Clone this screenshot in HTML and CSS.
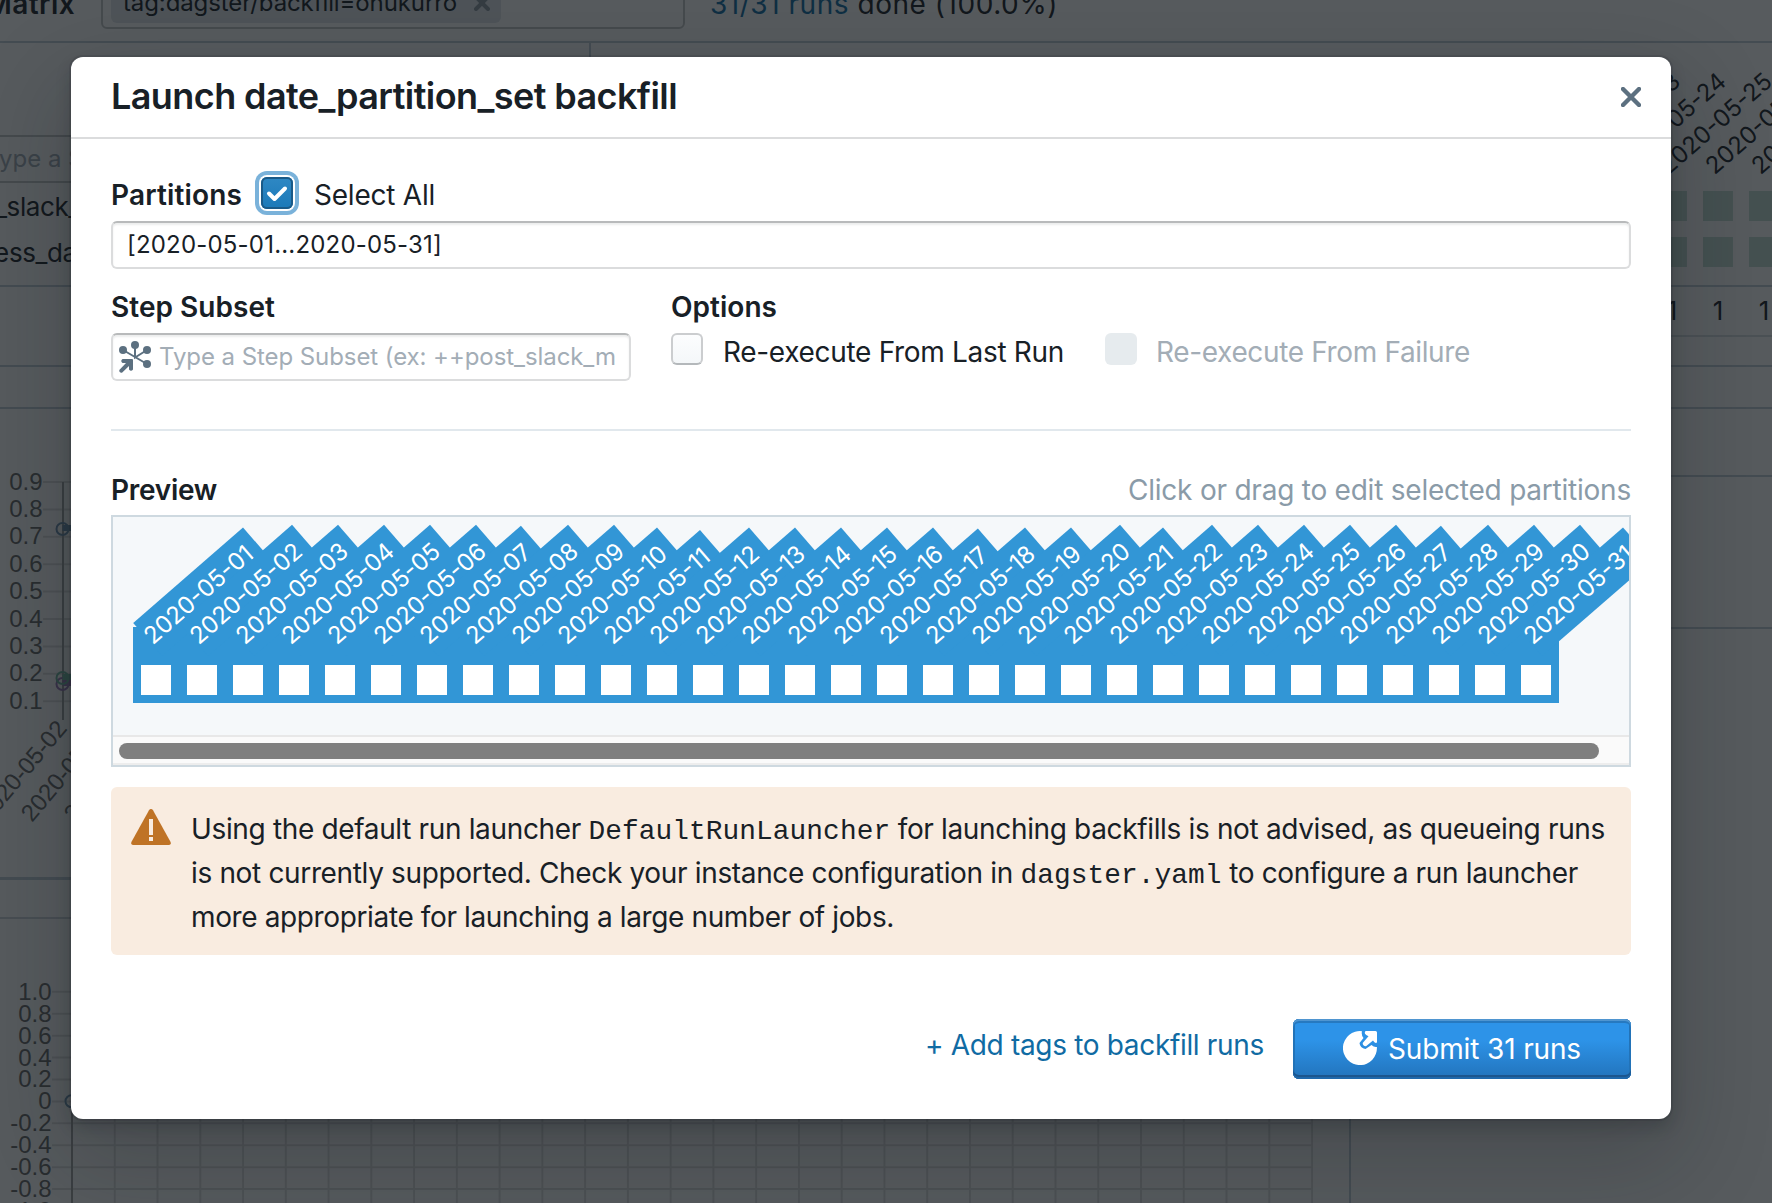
FILE: index.html
```html
<!DOCTYPE html>
<html lang="en">
<head>
<meta charset="utf-8">
<title>Launch backfill</title>
<link rel="stylesheet" href="styles.css">
</head>
<body>
<div class="page">
  <div class="topbar">
    <div class="topbar-title"><span class="fit" data-w="89">Matrix</span></div>
    <div class="tag-input">
      <div class="tag"><span class="fit" data-w="334">tag:dagster/backfill=onukurro</span>
        <svg width="16" height="16" viewBox="0 0 16 16"><path d="M2 2L14 14M14 2L2 14" stroke="#8c98a2" stroke-width="4" stroke-linecap="round"/></svg>
      </div>
    </div>
    <div class="run-status"><span class="fit" data-w="348"><a>31/31 runs</a> done (100.0%)</span></div>
  </div>
  <div class="matrix">
    <div class="steps">
      <div class="step-search">Type a Step Subset</div>
      <div class="step-name">post_slack_message</div>
      <div class="step-name second">process_data</div>
    </div>
    <svg class="matrix-grid" id="matrix" width="181" height="242"></svg>
  </div>
  <div class="counts"><span>1</span><span>1</span><span>1</span></div>
  <div class="strip"></div>
  <div class="spacer"></div>
  <div class="charts">
    <div class="chart-col">
      <svg class="chart" id="chart1" width="1349" height="468"></svg>
      <div class="chart-head"></div>
      <svg class="chart" id="chart2" width="1349" height="284"></svg>
    </div>
    <div class="legend-col"><div class="legend-a"></div><div class="legend-b"></div></div>
  </div>
</div>

<div class="overlay">
  <div class="dialog">
    <header class="dialog-header">
      <h1><span class="fit" data-w="566">Launch date_partition_set backfill</span></h1>
      <svg width="20" height="20" viewBox="0 0 20 20"><path d="M2 2L18 18M18 2L2 18" stroke="#5c7080" stroke-width="4.4" stroke-linecap="round"/></svg>
    </header>
    <div class="dialog-body">
      <div class="partitions-row">
        <span class="label"><span class="fit" data-w="131">Partitions</span></span>
        <span class="checkbox checked"><svg width="32" height="32" viewBox="0 0 32 32"><path d="M8 16.500L13.500 22L24 11.500" fill="none" stroke="#fff" stroke-width="4" stroke-linecap="round" stroke-linejoin="round"/></svg></span>
        <span class="select-all"><span class="fit" data-w="121">Select All</span></span>
      </div>
      <div class="field"><span class="fit" data-w="315">[2020-05-01...2020-05-31]</span></div>
      <div class="options-row">
        <div class="subset">
          <div class="label"><span class="fit" data-w="164">Step Subset</span></div>
          <div class="field subset-field">
            <svg width="32" height="32" viewBox="0 0 32 32" fill="#5c7080">
              <path d="M4 9L28 23M16 4V16.500L28 9" fill="none" stroke="#5c7080" stroke-width="2"/>
              <circle cx="4" cy="9" r="4"/><circle cx="16" cy="4" r="4"/><circle cx="28" cy="9" r="4"/><circle cx="28" cy="23" r="4"/>
              <path d="M3.500 18H13Q14 18 14 19V28.500Q12 31 10 28.500V25L3 31.700Q0 32 .3 29L7 22H3.500Q1 20 3.500 18Z"/>
            </svg>
            <span class="placeholder"><span class="fit" data-w="457">Type a Step Subset (ex: ++post_slack_m</span></span>
          </div>
        </div>
        <div class="options">
          <div class="label"><span class="fit" data-w="106">Options</span></div>
          <div class="checks">
            <span class="checkbox"></span><span class="check-text first"><span class="fit" data-w="341">Re-execute From Last Run</span></span>
            <span class="checkbox disabled"></span><span class="check-text off"><span class="fit" data-w="314">Re-execute From Failure</span></span>
          </div>
        </div>
      </div>
      <hr>
      <div class="preview-head">
        <span class="label"><span class="fit" data-w="106">Preview</span></span>
        <span class="hint"><span class="fit" data-w="503">Click or drag to edit selected partitions</span></span>
      </div>
      <div class="preview">
        <svg id="preview" width="1516" height="218"></svg>
        <div class="scrollbar"><div class="thumb"></div></div>
      </div>
      <div class="callout">
        <svg width="40" height="36" viewBox="0 0 40 36"><path d="M20 0Q21.300 0 22 1.200L39.600 33Q40.300 36 38 36H2Q-.3 36 .4 33L18 1.200Q18.700 0 20 0Z" fill="#bf7326"/><path d="M18 10h4v16h-4zM18 28h4v4h-4z" fill="#f9ece0"/></svg>
        <div class="callout-text">
          <div><span class="fit" data-w="1414">Using the default run launcher <code>DefaultRunLauncher</code> for launching backfills is not advised, as queueing runs</span></div>
          <div><span class="fit" data-w="1387">is not currently supported. Check your instance configuration in <code>dagster.yaml</code> to configure a run launcher</span></div>
          <div><span class="fit" data-w="703">more appropriate for launching a large number of jobs.</span></div>
        </div>
      </div>
    </div>
    <footer class="dialog-footer">
      <a class="add-tags"><span class="fit" data-w="339">+ Add tags to backfill runs</span></a>
      <div class="submit">
        <svg width="34" height="34" viewBox="0 0 34 34"><path d="M19 .2A17 17 0 1 0 33.900 16Q31 16.500 28.500 14L22.500 18Q17 17 16.500 12L20.500 7Q18 4 19 .2Z" fill="#fff"/><path d="M22.500 0H32.500Q34 0 34 1.500V11.500Q32 13 30 9.500L23 15.200Q19.500 15 19.700 12L25.500 5.200Q20 3 22.500 0Z" fill="#fff"/></svg>
        <span class="fit" data-w="193">Submit 31 runs</span>
      </div>
    </footer>
  </div>
</div>
<script src="main.js"></script>
</body>
</html>
```
FILE: styles.css
```css
* { box-sizing: border-box; }
body { margin: 0; width: 1772px; height: 1203px; overflow: hidden; background: #fff; color: #182026; font-family: Inter, "Liberation Sans", sans-serif; font-size: 28px; }
svg { display: block; flex: none; }
svg text { font-family: Inter, sans-serif; font-size: 24px; }
.chart text { font-family: "Liberation Sans", sans-serif; fill: #666; }
.fit { display: inline-block; white-space: pre; }
.page { width: 1772px; height: 1203px; overflow: hidden; display: flex; flex-direction: column; }
.topbar { height: 43px; flex: none; border-bottom: 2px solid #bfccd6; display: flex; align-items: flex-start; white-space: nowrap; }
.topbar-title { width: 101px; padding-right: 26px; font-weight: 600; display: flex; justify-content: flex-end; line-height: 34px; margin-top: -13px; }
.tag-input { width: 584px; height: 60px; margin-top: -31px; border: 2px solid #c4c6c7; border-radius: 6px; padding: 0 8px 4px; display: flex; align-items: flex-end; }
.tag { width: 390px; height: 48px; background: #dfe5ea; border-radius: 6px; font-size: 24px; padding: 0 12px; display: flex; align-items: center; gap: 17px; line-height: 40px; }
.tag svg { margin-top: 8px; }
.tag .fit { margin-top: 7px; }
.run-status { margin: -13px 0 0 25px; line-height: 34px; }
.run-status a { color: #106ba3; }
.matrix { height: 244px; flex: none; border-bottom: 2px solid #bfccd6; display: flex; }
.steps { width: 591px; border-right: 2px solid #bfccd6; padding-top: 92px; }
.step-search { height: 48px; border: solid #c4c6c7; border-width: 2px 0; color: #a0abb5; font-size: 24px; line-height: 44px; text-indent: -15px; white-space: nowrap; overflow: hidden; }
.step-name { height: 46px; line-height: 48px; font-size: 26px; letter-spacing: -.4px; text-indent: -57px; }
.step-name.second { text-indent: -60px; }
.matrix-grid { margin-left: 1000px; }
.counts { height: 50px; flex: none; margin-left: 591px; display: flex; justify-content: flex-end; border-bottom: 2px solid #d8dde0; font-size: 26px; line-height: 47px; }
.counts span { width: 46px; text-align: center; }
.counts span:last-child { margin-right: -15px; }
.strip { height: 30px; flex: none; border-bottom: 2px solid #bfccd6; }
.spacer { height: 42px; flex: none; border-bottom: 2px solid #bfccd6; }
.charts { flex: 1; display: flex; }
.chart-col { width: 1351px; border-right: 2px solid #bfccd6; }
.chart-head { height: 42px; border-top: 3px solid #bfccd6; border-bottom: 2px solid #ccd4da; }
.legend-col { flex: 1; }
.legend-a { height: 68px; border-bottom: 2px solid #bfccd6; }
.legend-b { height: 152px; border-bottom: 2px solid #bfccd6; }

.overlay { position: absolute; inset: 0; background: rgba(16,22,26,.7); padding: 57px 0 0 71px; }
.dialog { width: 1600px; height: 1062px; background: #fff; border-radius: 12px; box-shadow: 0 0 0 2px rgba(16,22,26,.1), 0 8px 16px rgba(16,22,26,.2), 0 36px 92px 12px rgba(16,22,26,.2); display: flex; flex-direction: column; }
.dialog-header { height: 82px; border-bottom: 2px solid #dbdcdd; padding: 0 30px 0 40px; display: flex; align-items: center; justify-content: space-between; }
h1 { margin: 0 0 2px; font-size: 36px; font-weight: 600; line-height: 44px; }
.dialog-body { padding: 32px 40px 0; flex: 1; }
.label { font-weight: 600; line-height: 37px; }
.partitions-row { height: 50px; display: flex; align-items: flex-start; padding-top: 6px; }
.partitions-row .label { width: 150px; }
.select-all { margin-left: 21px; line-height: 37px; }
.checkbox { width: 32px; height: 32px; border-radius: 6px; flex: none; background: linear-gradient(#fcfdfe, #f4f7f9); border: 2px solid #cbcdcf; border-bottom-color: #b4b8bb; }
.checkbox.checked { border: 0; background: linear-gradient(#2f88c4, #1b79b8); box-shadow: inset 0 0 0 2px #1a5a88, 0 0 0 2px #fff, 0 0 0 6px #7ab2da; }
.checkbox.disabled { border: 0; background: #e6ebee; }
.field { height: 48px; border: 2px solid #dbdcdd; border-top-color: #b8babb; border-radius: 6px; box-shadow: inset 0 2px 2px rgba(16,22,26,.08); font-size: 24px; line-height: 44px; padding-left: 14px; background: #fff; white-space: nowrap; }
.options-row { display: flex; gap: 40px; padding-top: 20px; height: 160px; }
.subset { width: 520px; }
.options-row .label { height: 44px; }
.subset-field { padding-left: 6px; display: flex; align-items: center; gap: 8px; line-height: 42px; }
.placeholder { color: #a3adb6; }
.checks { display: flex; height: 36px; line-height: 38px; }
.check-text { margin-left: 20px; white-space: nowrap; }
.check-text.first { width: 382px; }
.check-text.off { color: #a3adb6; margin-left: 19px; }
hr { margin: 0; border: 0; height: 2px; background: #e1e8ed; }
.preview-head { height: 84px; padding-top: 41px; display: flex; justify-content: space-between; line-height: 36px; }
.hint { color: #8a9ba8; }
.preview { height: 252px; border: 2px solid #ced9e0; background: #f5f8fa; }
#preview { overflow: hidden; }
.scrollbar { height: 30px; background: #fafafa; border-top: 2px solid #e8e8e8; border-bottom: 2px solid #ededed; padding: 6px; }
.thumb { width: 1480px; height: 16px; border-radius: 8px; background: #7f7f7f; }
.callout { margin-top: 20px; height: 168px; border-radius: 6px; background: #f9ece0; padding: 20px; display: flex; gap: 20px; }
.callout svg { margin-top: 2px; }
.callout-text { line-height: 45px; white-space: nowrap; }
.callout-text > div { height: 44px; }
code { font-family: "Liberation Mono", monospace; font-size: 27.8px; letter-spacing: .08px; }
.dialog-footer { height: 100px; flex: none; padding-right: 40px; display: flex; justify-content: flex-end; }
.add-tags { color: #106ba3; line-height: 53px; margin-right: 29px; }
.submit { width: 338px; height: 60px; border-radius: 6px; background: linear-gradient(#2d93e8 35%, #2273bb); box-shadow: inset 0 2px #4f95d0, inset 0 4px #2679c0, inset 0 -2px #1f68ab, inset 0 -4px #1c568e, inset 2px 0 #2273b8, inset -2px 0 #2273b8; color: #fff; padding-left: 50px; display: flex; align-items: center; gap: 11px; line-height: 61px; }
.submit svg { margin-top: -2px; }
```
FILE: main.js
```js
// Spread each text run to its design width; code keeps its own pitch.
document.querySelectorAll('.fit').forEach(function (el) {
  var target = Number(el.dataset.w);
  var code = el.querySelector('code');
  var n = el.textContent.length - (code ? code.textContent.length : 0);
  el.style.letterSpacing = (target - el.getBoundingClientRect().width) / n + 'px';
});

// One column header: a date turned by 41 degrees, anchored at its top left corner.
function dateLabel(x, y, date, fill, back) {
  var w = 149.5 - 4 * (date.split('1').length - 1) - 1.5 * (date.split('7').length - 1);
  return '<g transform="translate(' + x + ' ' + y + ') rotate(-41)">' +
    (back ? '<rect width="' + w + '" height="44" fill="' + back + '"/>' : '') +
    '<text x="0" y="29.800" fill="' + fill + '" textLength="' + (w - 10) + '">' + date + '</text></g>';
}
function day(n) { return '2020-05-' + String(n).padStart(2, '0'); }

// Partition preview
var blue = '#3296d6', back = '', front = '';
for (var i = 0; i < 31; i++) {
  var x = 20 + i * 46;
  back += '<rect x="' + x + '" y="110" width="46" height="76" fill="' + blue + '"/>';
  front += '<rect x="' + (x + 8) + '" y="148" width="30" height="30" fill="#fff"/>';
}
for (i = 0; i < 31; i++) back += dateLabel(20.2 + i * 46, 105.9, day(i + 1), '#fff', blue);
document.getElementById('preview').innerHTML = back + front;

// Run matrix, right-hand columns
var m = '';
for (i = 0; i < 5; i++) m += dateLabel(-34 + i * 46, 109.900, day(23 + i), '#182026');
for (i = 0; i < 3; i++) [148, 194].forEach(function (y) {
  m += '<rect x="' + (66 + i * 46) + '" y="' + y + '" width="30" height="30" fill="#c1ded2"/>';
});
document.getElementById('matrix').innerHTML = m;

function line(x1, y1, x2, y2, c) {
  return '<path d="M' + x1 + ' ' + y1 + 'L' + x2 + ' ' + y2 + '" stroke="' + (c || '#dedede') + '" stroke-width="2"/>';
}
function dot(x, y, c) {
  return '<circle cx="' + x + '" cy="' + y + '" r="6" fill="none" stroke="' + c + '" stroke-width="2"/><path d="M' + x + ' ' + (y - 1) + 'h20" stroke="' + c + '" stroke-width="6"/>';
}

var c1 = '';
for (i = 0; i < 9; i++) {
  var y1 = 73 + i * 27.4;
  c1 += line(43, y1, 1312, y1) + '<text x="42.500" y="' + (y1 + 7.5) + '" text-anchor="end">0.' + (9 - i) + '</text>';
}
c1 += line(63, 73, 63, 311, '#a0a0a0') + dot(62.5, 120, '#6d8fae') + dot(62.5, 275, '#9c78b8') + dot(62.5, 269, '#70b8a0');
for (i = 0; i < 3; i++) c1 += '<text transform="translate(' + (68 + i * 43) + ' 320) rotate(-50)" text-anchor="end">' + day(i + 2) + '</text>';
document.getElementById('chart1').innerHTML = c1;

var c2 = '', ticks = ['1.0', '0.8', '0.6', '0.4', '0.2', '0', '-0.2', '-0.4', '-0.6', '-0.8', '-1.0'];
ticks.forEach(function (t, k) {
  var y = 72.8 + k * 21.92;
  c2 += line(52, y, 1312, y) + '<text x="51.500" y="' + (y + 8) + '" text-anchor="end">' + t + '</text>';
});
for (i = 0; i < 30; i++) c2 += line(72 + i * 42.76, 72, 72 + i * 42.76, 284, i ? '' : '#a0a0a0');
c2 += dot(71.5, 182.3, '#6d8fae');
document.getElementById('chart2').innerHTML = c2;
```
